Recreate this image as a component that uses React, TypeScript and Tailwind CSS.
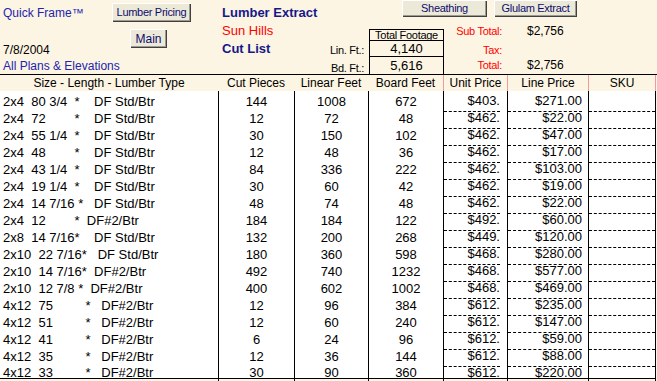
import React from "react";

type Row = {
  desc: string;
  cut: string;
  lin: string;
  bd: string;
  unit: string;
  line: string;
};

const rows: Row[] = [
  { desc: "2x4  80 3/4  *    DF Std/Btr", cut: "144", lin: "1008", bd: "672", unit: "$403.", line: "$271.00" },
  { desc: "2x4  72        *    DF Std/Btr", cut: "12", lin: "72", bd: "48", unit: "$462.", line: "$22.00" },
  { desc: "2x4  55 1/4  *    DF Std/Btr", cut: "30", lin: "150", bd: "102", unit: "$462.", line: "$47.00" },
  { desc: "2x4  48        *    DF Std/Btr", cut: "12", lin: "48", bd: "36", unit: "$462.", line: "$17.00" },
  { desc: "2x4  43 1/4  *    DF Std/Btr", cut: "84", lin: "336", bd: "222", unit: "$462.", line: "$103.00" },
  { desc: "2x4  19 1/4  *    DF Std/Btr", cut: "30", lin: "60", bd: "42", unit: "$462.", line: "$19.00" },
  { desc: "2x4  14 7/16 *   DF Std/Btr", cut: "48", lin: "74", bd: "48", unit: "$462.", line: "$22.00" },
  { desc: "2x4  12        *  DF#2/Btr", cut: "184", lin: "184", bd: "122", unit: "$492.", line: "$60.00" },
  { desc: "2x8  14 7/16*    DF Std/Btr", cut: "132", lin: "200", bd: "268", unit: "$449.", line: "$120.00" },
  { desc: "2x10  22 7/16*   DF Std/Btr", cut: "180", lin: "360", bd: "598", unit: "$468.", line: "$280.00" },
  { desc: "2x10  14 7/16*  DF#2/Btr", cut: "492", lin: "740", bd: "1232", unit: "$468.", line: "$577.00" },
  { desc: "2x10  12 7/8 *  DF#2/Btr", cut: "400", lin: "602", bd: "1002", unit: "$468.", line: "$469.00" },
  { desc: "4x12  75         *   DF#2/Btr", cut: "12", lin: "96", bd: "384", unit: "$612.", line: "$235.00" },
  { desc: "4x12  51         *   DF#2/Btr", cut: "12", lin: "60", bd: "240", unit: "$612.", line: "$147.00" },
  { desc: "4x12  41         *   DF#2/Btr", cut: "6", lin: "24", bd: "96", unit: "$612.", line: "$59.00" },
  { desc: "4x12  35         *   DF#2/Btr", cut: "12", lin: "36", bd: "144", unit: "$612.", line: "$88.00" },
  { desc: "4x12  33         *   DF#2/Btr", cut: "30", lin: "90", bd: "360", unit: "$612.", line: "$220.00" },
];

const cols = "grid grid-cols-[218px_76px_74px_75px_64px_81px_68px] w-[656px]";

function Btn({ label, className }: { label: string; className: string }) {
  return (
    <div
      className={`flex items-center justify-center bg-[#ece9d8] text-[#0c0c6e] shadow-[inset_1px_1px_0_#ffffff,inset_-1px_-1px_0_#404040,inset_-2px_-2px_0_#9d9b8f] ${className}`}
    >
      {label}
    </div>
  );
}

export default function App() {
  return (
    <div className="w-[657px] h-[381px] overflow-hidden bg-[#fcf5e3] font-['Liberation_Sans',Arial,sans-serif] text-black">
      {/* form header */}
      <div className="flex h-[74px]">
        <div className="flex w-[218px]">
          <div className="w-[112px] pl-[3px] text-[12px] leading-[14px]">
            <div className="mt-[6px] text-[#2323b0]">Quick Frame™</div>
            <div className="mt-[23px]">7/8/2004</div>
            <div className="mt-[2px] text-[#2323b0] whitespace-nowrap">All Plans &amp; Elevations</div>
          </div>
          <div className="flex flex-col">
            <Btn label="Lumber Pricing" className="mt-[3px] h-[19px] w-[79px] text-[11px] tracking-[-0.3px]" />
            <Btn label="Main" className="mt-[7px] ml-[18px] h-[19px] w-[37px] text-[12px]" />
          </div>
        </div>

        <div className="flex w-[151px] justify-between">
          <div className="pl-[4px] text-[13px] leading-[15px]">
            <div className="mt-[5px] font-bold text-[#17178a]">Lumber Extract</div>
            <div className="mt-[3px] text-[#ff0000]">Sun Hills</div>
            <div className="mt-[3px] font-bold text-[#17178a]">Cut List</div>
          </div>
          <div className="pr-[5px] text-right text-[11px] leading-[14px] tracking-[-0.3px]">
            <div className="mt-[43px]">Lin. Ft.:</div>
            <div className="mt-[4px]">Bd. Ft.:</div>
          </div>
        </div>

        <div className="flex flex-1 flex-col">
          <div className="flex h-[18px] text-[11px] tracking-[-0.3px]">
            <Btn label="Sheathing" className="ml-[33px] h-[17px] w-[85px]" />
            <Btn label="Glulam Extract" className="ml-[7px] h-[17px] w-[83px]" />
          </div>
          <div className="flex">
            <div className="mt-[11px] w-[75px] border-x border-t border-black text-center">
              <div className="h-[10px] text-[11px] leading-[10px] tracking-[-0.3px]">Total Footage</div>
              <div className="flex h-[16px] items-center justify-center border-t border-black text-[13px]">4,140</div>
              <div className="flex h-[18px] items-center justify-center border-t border-black text-[13px]">5,616</div>
            </div>
            <div className="text-[11px] leading-[13px]">
              <div className="mt-[7px] flex">
                <span className="w-[58px] text-right tracking-[-0.3px] text-[#ff0000]">Sub Total:</span>
                <span className="ml-[25px] text-[12px]">$2,756</span>
              </div>
              <div className="mt-[6px] flex">
                <span className="w-[58px] text-right tracking-[-0.3px] text-[#ff0000]">Tax:</span>
              </div>
              <div className="mt-[2px] flex">
                <span className="w-[58px] text-right tracking-[-0.3px] text-[#ff0000]">Total:</span>
                <span className="ml-[25px] text-[12px]">$2,756</span>
              </div>
            </div>
          </div>
        </div>
      </div>

      {/* table */}
      <div className="border-t border-black">
        <div className={`${cols} h-[16px] text-[12px] leading-[16px] text-center`}>
          <div>Size - Length - Lumber Type</div>
          <div>Cut Pieces</div>
          <div>Linear Feet</div>
          <div>Board Feet</div>
          <div className="border-l border-[#f49a9a]">Unit Price</div>
          <div className="border-l border-[#f49a9a]">Line Price</div>
          <div className="border-x border-[#f49a9a]">SKU</div>
        </div>

        <div className="w-[656px] border-b border-black bg-white text-[13px]">
          {rows.map((r, i) => {
            const last = i === rows.length - 1;
            const dash = last ? "" : "border-b border-dashed border-black";
            return (
              <div key={i} className={`${cols} ${last ? "h-[15px]" : "h-[17px]"}`}>
                <div className="flex items-center pl-[3px] whitespace-pre">{r.desc}</div>
                <div className="flex items-center justify-center border-l border-black">{r.cut}</div>
                <div className="flex items-center justify-center border-l border-black">{r.lin}</div>
                <div className="flex items-center justify-center border-l border-black">{r.bd}</div>
                <div className="flex border-l border-black">
                  <div className={`mr-[7px] flex flex-1 items-center justify-end ${dash}`}>{r.unit}</div>
                </div>
                <div className="flex border-l border-black">
                  <div className={`mr-[6px] flex flex-1 items-center justify-end ${dash}`}>{r.line}</div>
                </div>
                <div className="flex border-x border-black">
                  <div className={`flex-1 ${dash}`} />
                </div>
              </div>
            );
          })}
        </div>
      </div>
    </div>
  );
}
